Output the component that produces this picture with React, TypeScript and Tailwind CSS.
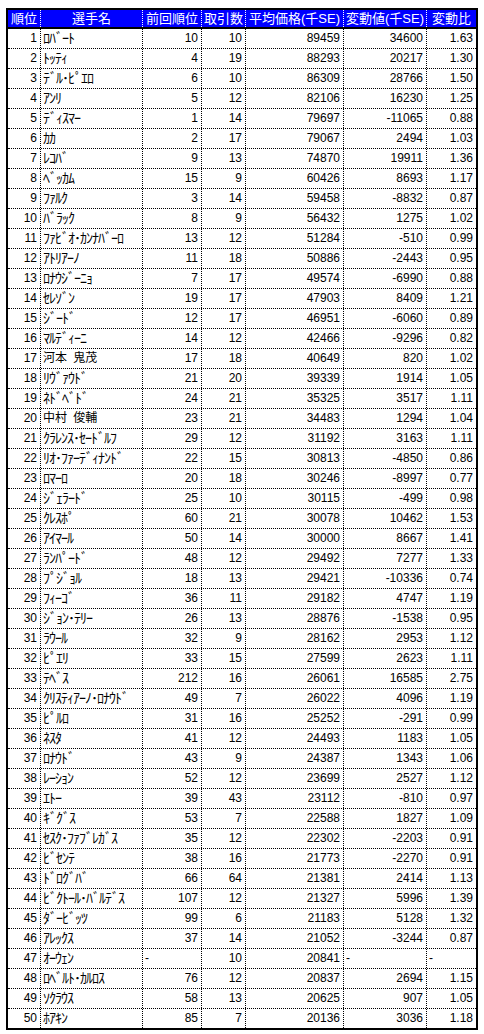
import React from 'react';

type Row = [number, string, string, string, string, string, string];

// 7列の幅（罫線込み）
const widths = ['w-[33px]', 'w-[102px]', 'w-[59px]', 'w-[44px]', 'w-[98px]', 'w-[83px]', 'w-[49px]'];

const headers = ['順位', '選手名', '前回順位', '取引数', '平均価格(千SE)', '変動値(千SE)', '変動比'];

const rows: Row[] = [
  [1, 'ﾛﾊﾞｰﾄ', '10', '10', '89459', '34600', '1.63'],
  [2, 'ﾄｯﾃｨ', '4', '19', '88293', '20217', '1.30'],
  [3, 'ﾃﾞﾙ･ﾋﾟｴﾛ', '6', '10', '86309', '28766', '1.50'],
  [4, 'ｱﾝﾘ', '5', '12', '82106', '16230', '1.25'],
  [5, 'ﾃﾞｨｽﾏｰ', '1', '14', '79697', '-11065', '0.88'],
  [6, 'ｶｶ', '2', '17', '79067', '2494', '1.03'],
  [7, 'ﾚｺﾊﾞ', '9', '13', '74870', '19911', '1.36'],
  [8, 'ﾍﾞｯｶﾑ', '15', '9', '60426', '8693', '1.17'],
  [9, 'ﾌｧﾙｸ', '3', '14', '59458', '-8832', '0.87'],
  [10, 'ﾊﾞﾗｯｸ', '8', '9', '56432', '1275', '1.02'],
  [11, 'ﾌｧﾋﾞｵ･ｶﾝﾅﾊﾞｰﾛ', '13', '12', '51284', '-510', '0.99'],
  [12, 'ｱﾄﾘｱｰﾉ', '11', '18', '50886', '-2443', '0.95'],
  [13, 'ﾛﾅｳｼﾞｰﾆｮ', '7', '17', '49574', '-6990', '0.88'],
  [14, 'ｾﾚｿﾞﾝ', '19', '17', '47903', '8409', '1.21'],
  [15, 'ｼﾞｰﾄﾞ', '12', '17', '46951', '-6060', '0.89'],
  [16, 'ﾏﾙﾃﾞｨｰﾆ', '14', '12', '42466', '-9296', '0.82'],
  [17, '河本 鬼茂', '17', '18', '40649', '820', '1.02'],
  [18, 'ﾘｳﾞｧｳﾄﾞ', '21', '20', '39339', '1914', '1.05'],
  [19, 'ﾈﾄﾞﾍﾞﾄﾞ', '24', '21', '35325', '3517', '1.11'],
  [20, '中村 俊輔', '23', '21', '34483', '1294', '1.04'],
  [21, 'ｸﾗﾚﾝｽ･ｾｰﾄﾞﾙﾌ', '29', '12', '31192', '3163', '1.11'],
  [22, 'ﾘｵ･ﾌｧｰﾃﾞｨﾅﾝﾄﾞ', '22', '15', '30813', '-4850', '0.86'],
  [23, 'ﾛﾏｰﾛ', '20', '18', '30246', '-8997', '0.77'],
  [24, 'ｼﾞｪﾗｰﾄﾞ', '25', '10', '30115', '-499', '0.98'],
  [25, 'ｸﾚｽﾎﾟ', '60', '21', '30078', '10462', '1.53'],
  [26, 'ｱｲﾏｰﾙ', '50', '14', '30000', '8667', '1.41'],
  [27, 'ﾗﾝﾊﾟｰﾄﾞ', '48', '12', '29492', '7277', '1.33'],
  [28, 'ﾌﾟｼﾞｮﾙ', '18', '13', '29421', '-10336', '0.74'],
  [29, 'ﾌｨｰｺﾞ', '36', '11', '29182', '4747', '1.19'],
  [30, 'ｼﾞｮﾝ･ﾃﾘｰ', '26', '13', '28876', '-1538', '0.95'],
  [31, 'ﾗｳｰﾙ', '32', '9', '28162', '2953', '1.12'],
  [32, 'ﾋﾟｴﾘ', '33', '15', '27599', '2623', '1.11'],
  [33, 'ﾃﾍﾞｽ', '212', '16', '26061', '16585', '2.75'],
  [34, 'ｸﾘｽﾃｨｱｰﾉ･ﾛﾅｳﾄﾞ', '49', '7', '26022', '4096', '1.19'],
  [35, 'ﾋﾟﾙﾛ', '31', '16', '25252', '-291', '0.99'],
  [36, 'ﾈｽﾀ', '41', '12', '24493', '1183', '1.05'],
  [37, 'ﾛﾅｳﾄﾞ', '43', '9', '24387', '1343', '1.06'],
  [38, 'ﾚｰｼｮﾝ', '52', '12', '23699', '2527', '1.12'],
  [39, 'ｴﾄｰ', '39', '43', '23112', '-810', '0.97'],
  [40, 'ｷﾞｸﾞｽ', '53', '7', '22588', '1827', '1.09'],
  [41, 'ｾｽｸ･ﾌｧﾌﾞﾚｶﾞｽ', '35', '12', '22302', '-2203', '0.91'],
  [42, 'ﾋﾞｾﾝﾃ', '38', '16', '21773', '-2270', '0.91'],
  [43, 'ﾄﾞﾛｸﾞﾊﾞ', '66', '64', '21381', '2414', '1.13'],
  [44, 'ﾋﾞｸﾄｰﾙ･ﾊﾞﾙﾃﾞｽ', '107', '12', '21327', '5996', '1.39'],
  [45, 'ﾀﾞｰﾋﾞｯﾂ', '99', '6', '21183', '5128', '1.32'],
  [46, 'ｱﾚｯｸｽ', '37', '14', '21052', '-3244', '0.87'],
  [47, 'ｵｰｳｪﾝ', '-', '10', '20841', '-', '-'],
  [48, 'ﾛﾍﾞﾙﾄ･ｶﾙﾛｽ', '76', '12', '20837', '2694', '1.15'],
  [49, 'ｿｸﾗｳｽ', '58', '13', '20625', '907', '1.05'],
  [50, 'ﾎｱｷﾝ', '85', '7', '20136', '3036', '1.18'],
];

// 半角カナだけの名前かどうか
const isHalfKana = (s: string) => /^[\uFF61-\uFF9F]+$/.test(s);

const App: React.FC = () => {
  return (
    <div className="min-h-screen bg-white pt-[8px] pl-[6px] font-['Liberation_Sans','Noto_Sans_CJK_JP',sans-serif] text-black">
      <div className="w-[472px] border-2 border-black">
        {/* 見出し行 */}
        <div className="flex h-[19px] border-b-2 border-black bg-[#0000ff] text-white">
          {headers.map((h, i) => (
            <div
              key={h}
              className={`${widths[i]} ${i < 6 ? 'border-r border-dotted border-white' : ''} flex items-center justify-center overflow-hidden whitespace-nowrap text-[13px] leading-[17px]`}
            >
              {h}
            </div>
          ))}
        </div>

        {/* データ行 */}
        {rows.map((r, ri) => {
          const last = ri === rows.length - 1;
          return (
            <div
              key={r[0]}
              className={`flex text-[12px] leading-[19px] ${last ? 'h-[19px]' : 'h-[20px] border-b border-dotted border-black'}`}
            >
              {r.map((v, ci) => {
                const isDash = v === '-';
                let align = 'text-right pr-[3px]';
                if (ci === 1) {
                  align = isHalfKana(v)
                    ? 'text-left pl-[2px] text-[14px] tracking-[-1px]'
                    : 'text-left pl-[2px] text-[12px] [word-spacing:3px]';
                } else if (isDash) align = 'text-left pl-[2px]';
                return (
                  <div
                    key={ci}
                    className={`${widths[ci]} ${ci < 6 ? 'border-r border-dotted border-black' : ''} ${align} overflow-hidden whitespace-nowrap`}
                  >
                    {v}
                  </div>
                );
              })}
            </div>
          );
        })}
      </div>
    </div>
  );
};

export default App;
